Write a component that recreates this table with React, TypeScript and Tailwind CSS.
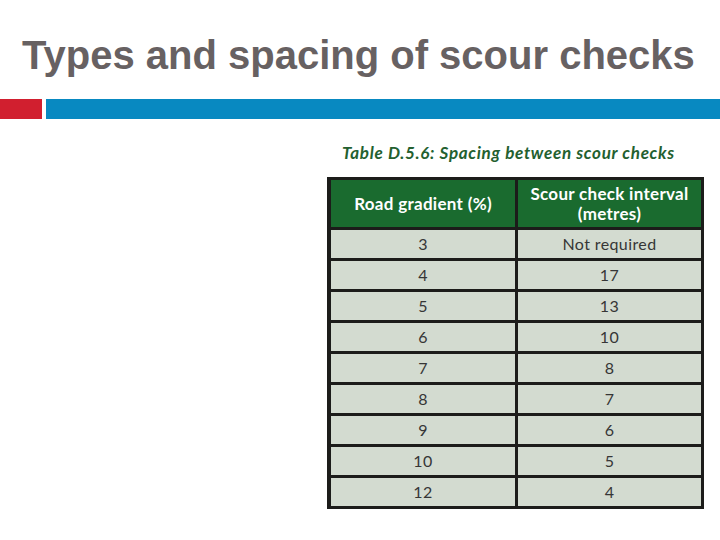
const rows: [string, string][] = [
  ['3', 'Not required'],
  ['4', '17'],
  ['5', '13'],
  ['6', '10'],
  ['7', '8'],
  ['8', '7'],
  ['9', '6'],
  ['10', '5'],
  ['12', '4'],
]

export default function App() {
  return (
    <div className="w-[720px] h-[540px] bg-white overflow-hidden">
      {/* Title */}
      <h1 className="pl-[22px] pt-[31px] h-[99px] font-['Liberation_Sans',Arial,sans-serif] font-bold text-[40px] leading-[48px] text-[#676162]">
        Types and spacing of scour checks
      </h1>

      {/* Accent bars */}
      <div className="flex gap-[4px] h-[20px]">
        <div className="w-[42px] bg-[#d11f2f]" />
        <div className="flex-1 bg-[#0889c1]" />
      </div>

      {/* Table figure */}
      <div className="ml-[327px] w-[377px] font-['Lato','Open_Sans',sans-serif]">
        <p className="pl-[15px] pt-[23px] h-[58px] text-[17px] leading-[22px] font-bold italic text-[#23602f] tracking-[0.7px] whitespace-nowrap">
          Table D.5.6: Spacing between scour checks
        </p>

        <div className="grid grid-cols-[184px_1fr] gap-[3px] bg-[#1c1c1a] pt-[3px] pb-[3px] pl-[4px] pr-[3px]">
          <div className="h-[47px] bg-[#1a6b2f] flex items-center justify-center text-white font-bold text-[17px] leading-[20px] tracking-[0.3px]">
            Road gradient (%)
          </div>
          <div className="h-[47px] bg-[#1a6b2f] flex items-center justify-center text-center text-white font-bold text-[17px] leading-[20px] tracking-[0.3px]">
            Scour check interval
            <br />
            (metres)
          </div>
          {rows.map(([g, i]) => (
            <div key={g} className="contents">
              <div className="h-[28px] bg-[#d3dbd0] flex items-center justify-center text-[16px] tracking-[0.4px] text-[#363636]">
                {g}
              </div>
              <div className="h-[28px] bg-[#d3dbd0] flex items-center justify-center text-[16px] tracking-[0.4px] text-[#363636]">
                {i}
              </div>
            </div>
          ))}
        </div>
      </div>
    </div>
  )
}
